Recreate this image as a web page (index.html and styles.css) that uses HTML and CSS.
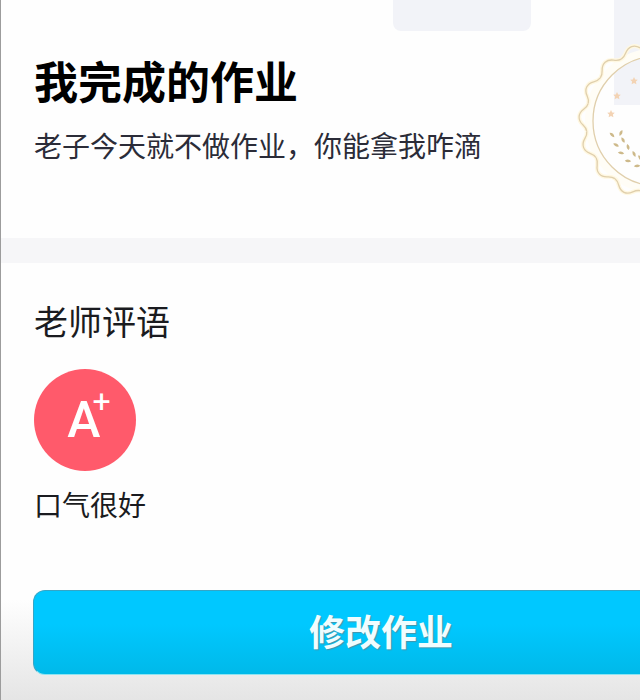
FILE: index.html
```html
<!DOCTYPE html>
<html lang="zh-CN">
<head>
    <meta charset="UTF-8">
    <meta name="viewport" content="width=device-width, initial-scale=1.0">
    <title>我完成的作业</title>
    <link rel="stylesheet" href="styles.css">
</head>
<body>
    <main class="page">
        <section class="homework">
            <div class="block block-small"></div>
            <div class="block block-tall"></div>
            <svg class="seal" viewBox="-82 -82 164 164" aria-hidden="true">
                <defs>
                    <path id="wave" d="M-70.6-14C-72-7-79-8-79 0S-72 7-70.6 14"/>
                    <path id="leaf" d="M-3.2 0Q0-3 3.2 0Q0 2.6-3.2 0Z"/>
                    <g id="edge">
                        <use href="#wave" transform="rotate(3)"/>
                        <use href="#wave" transform="rotate(25.5)"/>
                        <use href="#wave" transform="rotate(48)"/>
                        <use href="#wave" transform="rotate(70.5)"/>
                        <use href="#wave" transform="rotate(93)"/>
                        <use href="#wave" transform="rotate(-19.5)"/>
                        <use href="#wave" transform="rotate(-42)"/>
                        <use href="#wave" transform="rotate(-64.5)"/>
                        <use href="#wave" transform="rotate(-87)"/>
                    </g>
                </defs>
                <circle class="seal-ring" r="69"/>
                <use class="seal-glow" href="#edge"/>
                <use class="seal-line" href="#edge"/>
                <circle class="seal-line" r="65"/>
                <g class="seal-stars">
                    <path d="M-24-44l1.2 2.4 2.6.3-1.9 1.9.5 2.7-2.4-1.3-2.4 1.3.5-2.7-1.9-1.9 2.6-.3z"/>
                    <path d="M-41-29l1.2 2.4 2.6.3-1.9 1.9.5 2.7-2.4-1.3-2.4 1.3.5-2.7-1.9-1.9 2.6-.3z"/>
                    <path d="M-47-11l1.2 2.4 2.6.3-1.9 1.9.5 2.7-2.4-1.3-2.4 1.3.5-2.7-1.9-1.9 2.6-.3z"/>
                </g>
                <g class="seal-leaves">
                    <use href="#leaf" transform="translate(-46 14) rotate(42)"/>
                    <use href="#leaf" transform="translate(-37 12) rotate(-65)"/>
                    <use href="#leaf" transform="translate(-35 19) rotate(62)"/>
                    <use href="#leaf" transform="translate(-42 24) rotate(28)"/>
                    <use href="#leaf" transform="translate(-30 26) rotate(75)"/>
                    <use href="#leaf" transform="translate(-37 32) rotate(8)"/>
                    <use href="#leaf" transform="translate(-24 33) rotate(65)"/>
                    <use href="#leaf" transform="translate(-30 40) rotate(4)"/>
                    <use href="#leaf" transform="translate(-18 37) rotate(60)"/>
                    <use href="#leaf" transform="translate(-21 45) rotate(-4)"/>
                </g>
            </svg>
            <h1 class="title">我完成的作业</h1>
            <p class="answer">老子今天就不做作业，你能拿我咋滴</p>
        </section>

        <section class="review">
            <h2 class="review-title">老师评语</h2>
            <div class="grade">A<span class="grade-plus">+</span></div>
            <p class="comment">口气很好</p>
        </section>

        <footer class="footer">
            <button class="edit-button" type="button">修改作业</button>
        </footer>
    </main>
</body>
</html>
```
FILE: styles.css
```css
* {
    box-sizing: border-box;
}
body {
    margin: 0;
    background: #fefefe;
    color: #1a1b20;
    font-family: "Noto Sans CJK SC", sans-serif;
}
h1, h2, p {
    margin: 0;
    font-weight: 400;
}
.page {
    display: flex;
    flex-direction: column;
    min-height: 100vh;
    border-left: 1px solid #9c9c9c;
    overflow: hidden;
}
.homework {
    position: relative;
    padding: 50px 33px 72px;
    border-bottom: 25px solid #f6f6f8;
}
.block {
    position: absolute;
    top: 0;
    background: #f2f3f8;
}
.block-small {
    right: 109px;
    width: 138px;
    height: 31px;
    border-radius: 0 0 8px 8px;
}
.block-tall {
    right: 0;
    width: 26px;
    height: 105px;
}
.seal {
    position: absolute;
    top: 39px;
    right: -100px;
    width: 164px;
    height: 164px;
    fill: none;
}
.seal-ring {
    stroke: #fffdf6;
    stroke-width: 8;
}
.seal-glow {
    stroke: #fff8e2;
    stroke-width: 4;
}
.seal-line {
    stroke: #e0cfac;
    stroke-width: 1.3;
}
.seal-stars {
    fill: #f3d3b4;
}
.seal-leaves {
    fill: #cdb98a;
}
.title {
    position: relative;
    font-size: 44px;
    font-weight: 700;
    line-height: 60px;
    color: #000;
}
.answer {
    position: relative;
    margin-top: 14px;
    font-size: 28px;
    line-height: 42px;
    color: #2b2c38;
}
.review {
    padding: 34px 33px 0;
}
.review-title {
    font-size: 34px;
    line-height: 48px;
}
.grade {
    display: flex;
    justify-content: center;
    align-items: center;
    width: 102px;
    height: 102px;
    margin: 24px 0 12px;
    padding-left: 8px;
    border-radius: 50%;
    background: #ff5a6b;
    color: #fff;
    font-family: Roboto, sans-serif;
    font-size: 50px;
    font-weight: 500;
}
.grade-plus {
    align-self: flex-start;
    margin: 14px 0 0 -8px;
    font-size: 32px;
    font-weight: 400;
    line-height: 36px;
}
.comment {
    font-size: 28px;
    line-height: 42px;
}
.footer {
    display: grid;
    flex: 1;
    align-content: start;
    margin-top: 50px;
    padding: 15px 0 25px 32px;
    background: linear-gradient(#fefefe 20%, #e5e5e5);
}
/* the button runs past the right edge of the page */
.edit-button {
    height: 85px;
    margin-right: -89px;
    padding: 0 0 6px;
    border: 1px solid #35a5c6;
    border-bottom-color: #8de4f2;
    border-radius: 12px;
    background: linear-gradient(#00c8ff 40%, #00b9e9);
    color: #f0fdff;
    font-family: inherit;
    font-size: 36px;
    font-weight: 700;
    text-shadow: 1px 1px 1px #4594aa;
}
```
